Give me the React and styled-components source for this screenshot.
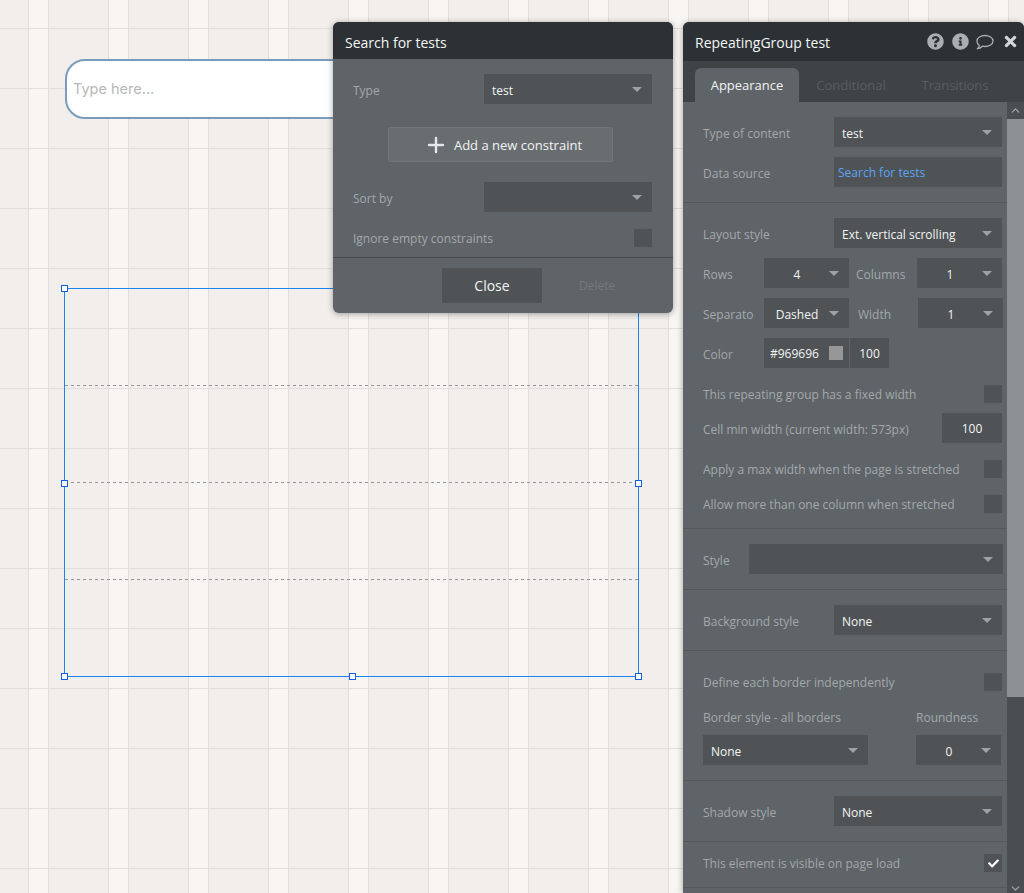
import React from "react";
import styled, { createGlobalStyle } from "styled-components";
import { FaQuestionCircle, FaInfoCircle, FaTimes, FaCheck } from "react-icons/fa";
import { FiChevronUp, FiChevronDown, FiPlus } from "react-icons/fi";

const GlobalStyle = createGlobalStyle`
  html, body {
    margin: 0;
    padding: 0;
    background: #f1eeeb;
  }
  * {
    box-sizing: border-box;
  }
`;

const Canvas = styled.div`
  position: relative;
  width: 1024px;
  height: 893px;
  overflow: hidden;
  font-family: "Open Sans", "Liberation Sans", sans-serif;
  background-color: #f1eeeb;
  background-image:
    repeating-linear-gradient(to bottom, transparent 0 28px, #e0dfdc 28px 29px, transparent 29px 60px),
    repeating-linear-gradient(to right, transparent 0 28px, #e0dfdc 28px 29px, #f8f5f2 29px 48px, #e0dfdc 48px 49px, transparent 49px 80px);
`;

const TextBox = styled.div`
  position: absolute;
  left: 65px;
  top: 59px;
  width: 400px;
  height: 60px;
  padding: 0 0 2px 6px;
  display: flex;
  align-items: center;
  background: #fff;
  border: 2px solid #7a9cbc;
  border-radius: 20px;
  font-family: Inter, "Open Sans", sans-serif;
  font-size: 14.5px;
  color: #b8b8b8;
`;

const RepeatingGroup = styled.div`
  position: absolute;
  left: 64px;
  top: 288px;
  width: 575px;
  height: 389px;
  border: 1px solid #1a85ee;
  display: grid;
  grid-template-rows: 97px 97px 97px 1fr;
`;

const Cell = styled.div`
  background: repeating-linear-gradient(to right, #969696 0 3px, transparent 3px 6px) bottom / 100% 1px no-repeat;
  &:last-of-type {
    background: none;
  }
`;

const Handle = styled.span`
  position: absolute;
  width: 7px;
  height: 7px;
  background: #fff;
  border: 1px solid #1060dc;
  left: ${(p) => p.$x}px;
  top: ${(p) => p.$y}px;
`;

const Popup = styled.div`
  position: absolute;
  left: 333px;
  top: 22px;
  width: 340px;
  height: 291px;
  border-radius: 6px;
  background: #5f6468;
  box-shadow: 0 1px 6px rgba(0, 0, 0, 0.35);
  overflow: hidden;
  display: flex;
  flex-direction: column;
`;

const Panel = styled.div`
  position: absolute;
  left: 683px;
  top: 22px;
  width: 341px;
  height: 871px;
  border-radius: 6px 6px 0 0;
  background: #5f6468;
  box-shadow: 0 1px 6px rgba(0, 0, 0, 0.35);
  overflow: hidden;
  display: flex;
  flex-direction: column;
`;

const Header = styled.div`
  height: ${(p) => p.$h}px;
  flex: none;
  display: flex;
  align-items: center;
  justify-content: space-between;
  padding: ${(p) => p.$pt}px 5px 0 12px;
  background: #2b3134;
  color: #f4f5f5;
  font-size: 14px;
`;

const HeaderIcons = styled.div`
  display: flex;
  align-items: center;
  gap: 8px;
  margin-top: -2px;
  color: #a9aeb1;
  font-size: 17px;
  svg {
    display: block;
  }
`;

const CommentSvg = styled.svg`
  margin-left: -1px;
`;

const CloseIcon = styled(FaTimes)`
  color: #d3d6d8;
`;

const Tabs = styled.div`
  height: 41px;
  flex: none;
  display: flex;
  align-items: flex-end;
  padding-left: 12px;
  background: #3e4346;
`;

const Tab = styled.div`
  height: 34px;
  width: ${(p) => p.$w}px;
  display: flex;
  align-items: center;
  justify-content: center;
  border-radius: 6px 6px 0 0;
  font-size: 13px;
  color: ${(p) => (p.$active ? "#f2f3f3" : "#595e61")};
  background: ${(p) => (p.$active ? "#5f6468" : "transparent")};
`;

const PanelBody = styled.div`
  flex: 1;
  min-height: 0;
  display: flex;
`;

const Content = styled.div`
  width: 324px;
  flex: none;
`;

const Section = styled.div`
  padding: ${(p) => p.$top ?? 15}px 5px 15px 20px;
  border-bottom: 1px solid #54585b;
  display: flex;
  flex-direction: column;
  gap: 10px;
`;

const Scrollbar = styled.div`
  flex: 1;
  display: flex;
  flex-direction: column;
  background: #4a4e51;
`;

const ScrollButton = styled.div`
  height: ${(p) => p.$h}px;
  flex: none;
  display: flex;
  justify-content: center;
  align-items: ${(p) => (p.$down ? "flex-start" : "center")};
  color: #a6aaac;
  font-size: 13px;
`;

const ScrollThumb = styled.div`
  height: 578px;
  flex: none;
  background: #8e9194;
`;

const ScrollTrack = styled.div`
  flex: 1;
`;

const Label = styled.div`
  width: ${(p) => (p.$w ? `${p.$w}px` : "auto")};
  flex: ${(p) => (p.$w ? "none" : "1")};
  margin-left: ${(p) => p.$ml ?? 0}px;
  font-size: 12px;
  color: #a3a8ab;
  white-space: nowrap;
  overflow: hidden;
`;

const Row = styled.div`
  display: flex;
  align-items: center;
  height: 30px;
  flex: none;
  ${Label} {
    padding-top: 2px;
  }
`;

const CheckRow = styled.div`
  display: flex;
  align-items: center;
  justify-content: space-between;
  height: 18px;
  flex: none;
  margin-top: ${(p) => p.$mt ?? 7}px;
`;

const Field = styled.div`
  position: relative;
  height: 30px;
  width: ${(p) => p.$w}px;
  flex: none;
  display: flex;
  align-items: center;
  justify-content: ${(p) => (p.$center ? "center" : "flex-start")};
  padding: ${(p) => (p.$center ? "2px 19px 0 0" : "2px 8px 0")};
  background: #4f5356;
  font-size: 12px;
  color: #f2f3f3;
  white-space: nowrap;
`;

const LinkField = styled(Field)`
  padding: 0 4px;
  color: #5aa4f5;
`;

const Caret = styled.span`
  position: absolute;
  right: 10px;
  top: 13px;
  width: 0;
  height: 0;
  border-left: 5px solid transparent;
  border-right: 5px solid transparent;
  border-top: 5px solid #9ea2a5;
`;

const Select = ({ w, center, children }) => (
  <Field $w={w} $center={center}>
    {children}
    <Caret />
  </Field>
);

const PlainInput = styled(Field)`
  justify-content: center;
  padding: 1px 0 0;
`;

const ColorField = styled(Field)`
  justify-content: space-between;
  padding: 0 6px;
  margin-right: 1px;
`;

const Swatch = styled.span`
  width: 14px;
  height: 14px;
  background: #969696;
`;

const Checkbox = styled.div`
  width: 18px;
  height: 18px;
  flex: none;
  display: flex;
  align-items: center;
  justify-content: center;
  background: #4f5356;
  color: #fff;
  font-size: 11px;
`;

const BorderRow = styled.div`
  display: flex;
  justify-content: space-between;
  margin-top: 8px;
  padding-right: 1px;
`;

const BorderColumn = styled.div`
  display: flex;
  flex-direction: column;
  gap: 9px;
`;

const PopupBody = styled.div`
  flex: 1;
  padding: 15px 21px 0 20px;
  display: flex;
  flex-direction: column;
`;

const AddButton = styled.div`
  width: 225px;
  height: 35px;
  margin: 23px 0 20px 35px;
  padding-left: 5px;
  display: flex;
  align-items: center;
  justify-content: center;
  gap: 6px;
  background: #686d70;
  border: 1px solid #71767a;
  border-radius: 2px;
  color: #f2f3f3;
  font-size: 13px;
  svg {
    font-size: 24px;
    stroke-width: 2.4;
    color: #e6e7e8;
  }
`;

const PopupFooter = styled.div`
  height: 56px;
  flex: none;
  border-top: 1px solid #484c4f;
  padding: 10px 0 0 109px;
  display: flex;
  gap: 37px;
`;

const CloseButton = styled.div`
  width: 100px;
  height: 35px;
  display: flex;
  align-items: center;
  justify-content: center;
  background: #4f5356;
  color: #f2f3f3;
  font-size: 14px;
`;

const DeleteButton = styled.div`
  height: 35px;
  display: flex;
  align-items: center;
  font-size: 12px;
  color: #74787b;
`;

const handles = [
  [61, 285],
  [61, 480],
  [635, 480],
  [61, 673],
  [349, 673],
  [635, 673],
];

const CommentIcon = () => (
  <CommentSvg width="18" height="16" viewBox="0 0 18 16" fill="none" stroke="currentColor" strokeWidth="1.3">
    <path d="M9 1.5c4.2 0 8 2.2 8 5.500s-3.800 5.500-8 5.500c-.9 0-1.800-.1-2.600-.3C5.300 13.400 3.600 14.500 1.600 14.600c.9-.9 1.500-2 1.700-3.100C1.800 10.400 1 8.800 1 7c0-3.300 3.800-5.500 8-5.500z" />
  </CommentSvg>
);

export default function App() {
  return (
    <Canvas>
      <GlobalStyle />
      <TextBox>Type here...</TextBox>

      <RepeatingGroup>
        <Cell />
        <Cell />
        <Cell />
        <Cell />
      </RepeatingGroup>
      {handles.map(([x, y]) => (
        <Handle key={`${x}-${y}`} $x={x} $y={y} />
      ))}

      <Popup>
        <Header $h={37} $pt={4}>Search for tests</Header>
        <PopupBody>
          <Row>
            <Label>Type</Label>
            <Select w={168}>test</Select>
          </Row>
          <AddButton>
            <FiPlus />
            Add a new constraint
          </AddButton>
          <Row>
            <Label>Sort by</Label>
            <Select w={168} />
          </Row>
          <CheckRow $mt={17}>
            <Label>Ignore empty constraints</Label>
            <Checkbox />
          </CheckRow>
        </PopupBody>
        <PopupFooter>
          <CloseButton>Close</CloseButton>
          <DeleteButton>Delete</DeleteButton>
        </PopupFooter>
      </Popup>

      <Panel>
        <Header $h={39} $pt={2}>
          RepeatingGroup test
          <HeaderIcons>
            <FaQuestionCircle />
            <FaInfoCircle />
            <CommentIcon />
            <CloseIcon />
          </HeaderIcons>
        </Header>
        <Tabs>
          <Tab $active $w={104}>Appearance</Tab>
          <Tab $w={104}>Conditional</Tab>
          <Tab $w={104}>Transitions</Tab>
        </Tabs>
        <PanelBody>
          <Content>
            <Section>
              <Row>
                <Label>Type of content</Label>
                <Select w={168}>test</Select>
              </Row>
              <Row>
                <Label>Data source</Label>
                <LinkField $w={168}>Search for tests</LinkField>
              </Row>
            </Section>

            <Section>
              <Row>
                <Label>Layout style</Label>
                <Select w={168}>Ext. vertical scrolling</Select>
              </Row>
              <Row>
                <Label $w={61}>Rows</Label>
                <Select w={85} center>4</Select>
                <Label $w={61} $ml={7}>Columns</Label>
                <Select w={85} center>1</Select>
              </Row>
              <Row>
                <Label $w={61}>Separato</Label>
                <Select w={85} center>Dashed</Select>
                <Label $w={60} $ml={9}>Width</Label>
                <Select w={85} center>1</Select>
              </Row>
              <Row>
                <Label $w={61}>Color</Label>
                <ColorField $w={85}>
                  #969696
                  <Swatch />
                </ColorField>
                <PlainInput $w={39}>100</PlainInput>
              </Row>
              <CheckRow>
                <Label>This repeating group has a fixed width</Label>
                <Checkbox />
              </CheckRow>
              <Row>
                <Label>Cell min width (current width: 573px)</Label>
                <PlainInput $w={60}>100</PlainInput>
              </Row>
              <CheckRow>
                <Label>Apply a max width when the page is stretched</Label>
                <Checkbox />
              </CheckRow>
              <CheckRow>
                <Label>Allow more than one column when stretched</Label>
                <Checkbox />
              </CheckRow>
            </Section>

            <Section>
              <Row>
                <Label $w={46}>Style</Label>
                <Select w={254} />
              </Row>
            </Section>

            <Section>
              <Row>
                <Label>Background style</Label>
                <Select w={168}>None</Select>
              </Row>
            </Section>

            <Section>
              <CheckRow>
                <Label>Define each border independently</Label>
                <Checkbox />
              </CheckRow>
              <BorderRow>
                <BorderColumn>
                  <Label>Border style - all borders</Label>
                  <Select w={165}>None</Select>
                </BorderColumn>
                <BorderColumn>
                  <Label>Roundness</Label>
                  <Select w={85} center>0</Select>
                </BorderColumn>
              </BorderRow>
            </Section>

            <Section>
              <Row>
                <Label>Shadow style</Label>
                <Select w={168}>None</Select>
              </Row>
            </Section>

            <Section $top={12}>
              <CheckRow $mt={0}>
                <Label>This element is visible on page load</Label>
                <Checkbox>
                  <FaCheck />
                </Checkbox>
              </CheckRow>
            </Section>
          </Content>
          <Scrollbar>
            <ScrollButton $h={17}>
              <FiChevronUp />
            </ScrollButton>
            <ScrollThumb />
            <ScrollTrack />
            <ScrollButton $h={11} $down>
              <FiChevronDown />
            </ScrollButton>
          </Scrollbar>
        </PanelBody>
      </Panel>
    </Canvas>
  );
}
